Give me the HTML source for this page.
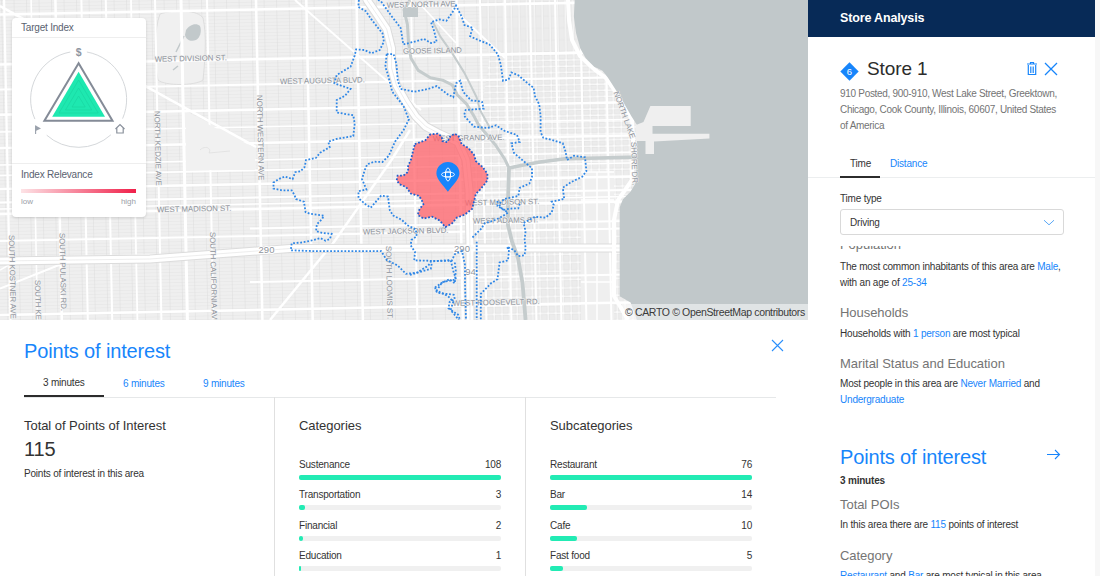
<!DOCTYPE html>
<html><head><meta charset="utf-8">
<style>
*{margin:0;padding:0;box-sizing:border-box}
html,body{width:1100px;height:576px;overflow:hidden;background:#fff;font-family:"Liberation Sans",sans-serif;color:#333}
.a{position:absolute;white-space:nowrap;line-height:1}
#map{position:absolute;left:0;top:0;width:808px;height:320px;overflow:hidden;background:#ebebeb}
#panel{position:absolute;left:808px;top:0;width:287px;height:576px;background:#fff;overflow:hidden}
#sb{position:absolute;left:1095px;top:0;width:5px;height:576px;background:#f7f7f7}
#bottom{position:absolute;left:0;top:320px;width:808px;height:256px;background:#fff;overflow:hidden}
.blue{color:#1785fb}
.grey{color:#747474}
.bar{position:absolute;height:5px;border-radius:2px;background:#f0f0f0}
.fill{position:absolute;left:0;top:0;height:5px;border-radius:2px;background:#22ebb4}
[style*="font-size:10px"]{letter-spacing:-0.2px}
[style*="font-size:13px"]{letter-spacing:-0.05px}
[style*="font-size:20px"]{letter-spacing:-0.15px}
</style></head><body>
<div id="map">
<svg width="808" height="320" viewBox="0 0 808 320" style="position:absolute;left:0;top:0" font-family="Liberation Sans, sans-serif">
<defs>
<pattern id="parcel" patternTransform="rotate(-1.15)" x="1" y="0" width="12.5" height="3.4" patternUnits="userSpaceOnUse"><path d="M0 0.2H12.5" stroke="#e2e2e2" stroke-width="0.6" fill="none"/><path d="M0.3 0V3.4" stroke="#dcdcdc" stroke-width="0.6" fill="none"/></pattern>
<pattern id="parcel2" patternTransform="rotate(-1.15)" x="4" y="14.5" width="25" height="12.5" patternUnits="userSpaceOnUse"><path d="M0 12.2H25" stroke="#f7f7f7" stroke-width="1.2" fill="none"/></pattern>
<pattern id="dtgrid" patternTransform="rotate(-1.15)" x="2.5" y="5" width="7.7" height="8.4" patternUnits="userSpaceOnUse"><rect x="0" y="0" width="7.7" height="8.4" fill="#ffffff"/><rect x="1" y="1" width="5.9" height="6.6" fill="#ececec" stroke="#dedede" stroke-width="0.6"/></pattern><pattern id="dtM" patternTransform="rotate(-1.15)" x="2.5" y="3" width="7.7" height="6.2" patternUnits="userSpaceOnUse"><rect x="0" y="0" width="7.7" height="6.2" fill="#ffffff"/><rect x="1" y="1" width="5.9" height="4.4" fill="#ececec" stroke="#dedede" stroke-width="0.6"/></pattern>
<pattern id="dtN" patternTransform="rotate(-1.15)" x="2.5" y="14" width="7.7" height="50" patternUnits="userSpaceOnUse"><rect x="0" y="0" width="7.7" height="50" fill="#ffffff"/><rect x="1" y="1.2" width="5.9" height="47.6" fill="#ececec" stroke="#dedede" stroke-width="0.6"/><path d="M1 13H6.9M1 25H6.9M1 37H6.9" stroke="#e0e0e0" stroke-width="0.5"/></pattern>
</defs>
<rect width="808" height="320" fill="#efefef"/>
<rect width="808" height="320" fill="url(#parcel)"/>
<polygon points="480,0 575,0 578,40 582,54 490,54 480,40" fill="url(#dtN)"/><polygon points="490,54 582,54 590,62 603,72 618,95 630,118 640,125 640,160 470,160 480,120" fill="url(#dtM)"/><polygon points="470,160 640,160 640,320 470,320" fill="url(#dtgrid)"/><rect x="581" y="172" width="33" height="148" fill="#efefef"/><path d="M581,172H614M581,200H614M581,248H614M581,282H614M597,172V320" stroke="#fff" stroke-width="1.5"/><circle cx="605.5" cy="247" r="3" fill="#c5cccd"/>
<path d="M160,14 C175,9 198,10 203,18 C207,35 205,60 203,80 C195,86 165,86 158,80 C154,60 154,30 160,14 Z" fill="#f0f0f0" stroke="#d9d9d9" stroke-width="0.8"/>
<path d="M186,30 C189,25 196,22 200,26 C202,31 200,38 196,40 C191,42 186,40 185,35 Z" fill="#c2c9cb"/><path d="M184,36 L176,52 M173,70 L178,66" stroke="#c2c9cb" stroke-width="1.5" fill="none"/>
<path d="M185,111 L256,146 L256,171 L185,171 Z" fill="#f1f1f1"/>
<g stroke="#ffffff" fill="none"><line x1="4.10" y1="0" x2="10.50" y2="320" stroke-width="2.2"/><line x1="31.10" y1="0" x2="37.50" y2="320" stroke-width="1.6"/><line x1="55.40" y1="0" x2="61.80" y2="320" stroke-width="2.5"/><line x1="81.40" y1="0" x2="87.80" y2="320" stroke-width="2"/><line x1="105.80" y1="0" x2="112.20" y2="320" stroke-width="2"/><line x1="131.00" y1="0" x2="137.40" y2="320" stroke-width="1.8"/><line x1="155.00" y1="0" x2="161.40" y2="320" stroke-width="2"/><line x1="181.00" y1="0" x2="187.40" y2="320" stroke-width="3"/><line x1="207.00" y1="0" x2="213.40" y2="320" stroke-width="2"/><line x1="256.00" y1="0" x2="262.40" y2="320" stroke-width="2.5"/><line x1="306.30" y1="0" x2="312.70" y2="320" stroke-width="2.5"/><line x1="356.50" y1="0" x2="362.90" y2="320" stroke-width="2.5"/><line x1="411.00" y1="0" x2="417.40" y2="320" stroke-width="2"/><line x1="456.50" y1="0" x2="462.90" y2="320" stroke-width="2.5"/><line x1="480.00" y1="0" x2="486.40" y2="320" stroke-width="2"/><line x1="505.00" y1="0" x2="511.40" y2="320" stroke-width="2"/><line x1="530.00" y1="0" x2="536.40" y2="320" stroke-width="2"/><line x1="555.00" y1="0" x2="561.40" y2="320" stroke-width="2"/><line x1="580.00" y1="0" x2="586.40" y2="320" stroke-width="2"/><line x1="605.00" y1="0" x2="611.40" y2="320" stroke-width="2"/><line x1="0" y1="14.50" x2="640" y2="1.70" stroke-width="2.5"/><line x1="0" y1="64.40" x2="640" y2="51.60" stroke-width="2.5"/><line x1="0" y1="89.50" x2="640" y2="76.70" stroke-width="2"/><line x1="0" y1="114.80" x2="640" y2="102.00" stroke-width="2.5"/><line x1="0" y1="132.00" x2="640" y2="119.20" stroke-width="1.5"/><line x1="0" y1="148.00" x2="640" y2="135.20" stroke-width="2.5"/><line x1="0" y1="165.00" x2="640" y2="152.20" stroke-width="1.5"/><line x1="0" y1="175.50" x2="640" y2="162.70" stroke-width="1.6"/><line x1="0" y1="189.00" x2="640" y2="176.20" stroke-width="2.5"/><line x1="0" y1="202.50" x2="640" y2="189.70" stroke-width="2"/><line x1="0" y1="209.00" x2="640" y2="196.20" stroke-width="1.5"/><line x1="0" y1="214.00" x2="640" y2="201.20" stroke-width="2.5"/><line x1="0" y1="241.00" x2="640" y2="228.20" stroke-width="2"/><line x1="0" y1="258.00" x2="640" y2="245.20" stroke-width="1.5"/><line x1="0" y1="315.00" x2="640" y2="302.20" stroke-width="2.5"/><line x1="250" y1="228.50" x2="640" y2="220.70" stroke-width="2"/><line x1="250" y1="282.00" x2="640" y2="274.20" stroke-width="2"/><polyline points="452,8 505,58" stroke-width="2" fill="none"/><polyline points="420,4 456,43" stroke-width="1.8" fill="none"/><polyline points="0,6 256,147" stroke-width="2.5" fill="none"/><polyline points="295,0 386,80 421,110" stroke-width="2" fill="none"/><polyline points="410,130 391.5,160 334,242 270,320" stroke-width="2.5" fill="none"/><polyline points="0,288.6 59,265 85,257" stroke-width="2" fill="none"/><polyline points="0,270 22.6,257" stroke-width="1.5" fill="none"/></g>
<path d="M186,113 L255,148 L255,170 L186,170 Z" fill="#f1f1f1"/><path d="M200,150 C205,145 212,148 209,153 L230,151" stroke="#e0e0e0" stroke-width="0.8" fill="none"/>
<g fill="none" stroke-linejoin="round" stroke-linecap="round"><g stroke="#dcdcdc" stroke-width="9"><polyline points="0,261 150,259 290,248.5 470,248 640,248" /><polyline points="367,0 377,14.6 386.7,29 391.6,48.6 391.6,68 396.4,85 406,102 415.9,116.6 425.6,126.3 440,134 458,142 466,160 469,190 470,248 470,320" /></g><g stroke="#ffffff" stroke-width="7"><polyline points="0,261 150,259 290,248.5 470,248 640,248" /><polyline points="367,0 377,14.6 386.7,29 391.6,48.6 391.6,68 396.4,85 406,102 415.9,116.6 425.6,126.3 440,134 458,142 466,160 469,190 470,248 470,320" /></g><g stroke="#e8e8e8" stroke-width="0.8"><polyline points="0,261 150,259 290,248.5 470,248 640,248" /><polyline points="367,0 377,14.6 386.7,29 391.6,48.6 391.6,68 396.4,85 406,102 415.9,116.6 425.6,126.3 440,134 458,142 466,160 469,190 470,248 470,320" /></g></g>
<polyline points="568,0 569,20 572,40 580,56 595,70 606,78 620,98 632,120 633,140 632,180 618,200 614,220 614,296 628,320" fill="none" stroke="#fff" stroke-width="4"/>
<g fill="none" stroke="#c5cccd" stroke-linejoin="round"><polyline points="410.0,0.0 404.0,10.0 407.4,24.3 408.6,43.7 411.0,58.3 418.3,70.4 430.4,77.7 442.6,80.2 452.3,85.0 457.2,94.7 466.9,104.4 474.2,116.6 478.5,124.8 495.5,145.0 504.5,158.7 509.0,168.0" stroke-width="3"/><polyline points="432.9,21.9 440.2,36.4 452.3,53.4 464.4,72.9 471.7,87.4 476.6,97.2 480.0,110.0 490.0,128.0" stroke-width="2"/><polyline points="509.0,168.0 521.0,165.5 540.0,162.0 565.0,158.7 600.0,158.0 640.0,157.0" stroke-width="3.5"/><polyline points="509.0,168.0 508.0,200.0 508.0,225.0 512.0,241.7 518.0,258.0 522.5,283.0 525.6,320.0" stroke-width="3.8"/></g>
<rect x="403" y="7" width="15" height="10" fill="#c2c9cb"/>
<polygon points="574.7,0.0 573.9,16.7 576.1,33.3 580.3,48.6 585.8,58.3 594.2,66.7 602.5,70.8 608.0,77.8 620.5,97.2 631.7,116.7 637.0,125.0 637.0,160.0 635.3,183.8 630.6,191.6 622.8,199.4 619.7,207.2 619.7,296.2 630.6,302.5 636.9,320.0 808.0,320.0 808.0,0.0" fill="#c1c8ca"/>
<polygon points="636,125 643.5,122 650.4,106 690.7,106 690.7,126.1 652.5,126.1 652.5,133.75 709.4,133.75 709.4,138.6 654,141.4 654,154 645.5,154 645.5,141 636,141" fill="#efefef"/>
<g fill="#8e939b" stroke="#f2f2f2" stroke-width="1" paint-order="stroke"><text x="386.7" y="7.7" font-size="7.8" letter-spacing="0" text-anchor="start" transform="rotate(-1.15 386.7 7.7)">WEST NORTH AVE</text><text x="403" y="53.8" font-size="7.8" letter-spacing="0" text-anchor="start" transform="rotate(-1.15 403 53.8)">GOOSE ISLAND</text><text x="154.7" y="61.7" font-size="7.8" letter-spacing="0" text-anchor="start" transform="rotate(-1.15 154.7 61.7)">WEST DIVISION ST.</text><text x="280" y="84" font-size="7.8" letter-spacing="0" text-anchor="start" transform="rotate(-1.15 280 84)">WEST AUGUSTA BLVD.</text><text x="157" y="212.2" font-size="7.8" letter-spacing="0" text-anchor="start" transform="rotate(-1.15 157 212.2)">WEST MADISON ST.</text><text x="433" y="141.2" font-size="7.8" letter-spacing="0" text-anchor="start" transform="rotate(-1.15 433 141.2)">WEST GRAND AVE.</text><text x="465" y="205.5" font-size="7.8" letter-spacing="0" text-anchor="start" transform="rotate(-1.15 465 205.5)">WEST MADISON ST.</text><text x="473" y="223.6" font-size="7.8" letter-spacing="0" text-anchor="start" transform="rotate(-1.15 473 223.6)">WEST ADAMS ST.</text><text x="363" y="234.5" font-size="7.8" letter-spacing="0" text-anchor="start" transform="rotate(-1.15 363 234.5)">WEST JACKSON BLVD.</text><text x="452.7" y="305.8" font-size="7.8" letter-spacing="0" text-anchor="start" transform="rotate(-1.15 452.7 305.8)">WEST ROOSEVELT RD.</text><text x="154.5" y="111" font-size="7.8" letter-spacing="0" text-anchor="start" transform="rotate(88.85 154.5 111)">NORTH KEDZIE AVE</text><text x="257" y="95" font-size="7.8" letter-spacing="0" text-anchor="start" transform="rotate(88.85 257 95)">NORTH WESTERN AVE</text><text x="9" y="235" font-size="7.8" letter-spacing="0" text-anchor="start" transform="rotate(88.85 9 235)">SOUTH KOSTNER AVE</text><text x="35" y="280" font-size="7.8" letter-spacing="0" text-anchor="start" transform="rotate(88.85 35 280)">SOUTH KEDZIE AVE</text><text x="59.5" y="233" font-size="7.8" letter-spacing="0" text-anchor="start" transform="rotate(88.85 59.5 233)">SOUTH PULASKI RD.</text><text x="210" y="232" font-size="7.8" letter-spacing="0" text-anchor="start" transform="rotate(88.85 210 232)">SOUTH CALIFORNIA AVE</text><text x="386" y="246" font-size="7.8" letter-spacing="0" text-anchor="start" transform="rotate(88.85 386 246)">SOUTH LOOMIS ST.</text><text x="613.5" y="92.5" font-size="7.8" letter-spacing="0" text-anchor="start" transform="rotate(70 613.5 92.5)">NORTH LAKE</text><text x="631" y="142" font-size="7.8" letter-spacing="0" text-anchor="start" transform="rotate(88 631 142)">SHORE DR.</text></g>
<g fill="#8f949c" font-size="9.5" text-anchor="middle" stroke="#ffffff" stroke-width="2" paint-order="stroke"><text x="266.5" y="252.5">290</text><text x="462" y="252">290</text><text x="470.5" y="274.5">94</text></g>
<g fill="none" stroke="#2f87e6" stroke-width="1.8" stroke-dasharray="1.8 1.75">
<polyline points="358.9,0.0 358.3,6.9 365.8,11.1 371.4,19.4 376.9,26.4 382.5,33.3 383.9,41.7 379.7,50.0 371.4,53.3 364.4,50.0 356.1,49.4 354.7,55.6 350.6,66.7 336.7,75.0 334.4,83.3 350.6,88.9 345.0,95.8 336.7,100.0 336.7,112.5 353.3,115.3 354.7,123.6 353.3,136.1 336.7,138.9 328.3,141.7 329.7,147.2 320.0,152.8 315.8,158.0 306.0,160.0 304.7,166.9 300.4,171.3 295.2,172.2 292.6,179.1 284.8,176.5 278.7,179.1 273.5,182.6 273.5,188.6 282.2,190.4 291.7,190.4 294.3,194.7 296.0,199.1 303.9,201.7 305.6,212.1 309.9,213.8 323.8,215.6 322.1,219.0 316.9,224.2 316.0,231.2 322.1,232.9 331.6,233.8 329.9,239.0 325.6,240.7 320.3,238.1 310.8,240.7 301.3,242.5 291.7,243.3 290.8,250.3 313.4,251.1 356.8,251.1 381.1,251.1 386.7,260.0 397.8,265.6 406.0,273.9 417.2,272.5 428.3,265.6 431.0,261.4 450.6,260.0 453.3,271.0 456.0,279.4 442.2,282.2 436.7,290.6 447.8,296.0 453.3,301.7 450.6,310.0 458.9,320.0"/>
<polyline points="378.0,0.0 381.0,1.4 392.0,16.7 400.6,27.8 403.3,44.4 414.4,41.7 424.0,38.9 431.0,43.0 436.7,41.7 434.0,30.6 431.0,22.2 439.4,19.4 446.4,20.8 453.3,11.1 456.0,5.6 461.7,16.7 464.4,25.0 472.8,27.8 470.0,36.1 475.6,38.9 489.4,44.4 497.8,54.2 500.6,63.9 501.7,71.1 503.0,80.8 508.6,79.4 511.4,72.5 518.3,75.3 528.0,83.6 533.6,87.8 535.0,96.1 539.2,104.4 540.6,115.6 540.6,132.2 543.3,137.8 554.4,140.6 562.8,143.3 565.6,151.7 567.0,160.0 574.0,155.8 585.0,157.2 586.4,171.1 582.2,176.7 571.0,182.2 562.8,187.8 564.2,198.9 551.7,201.7 553.8,205.0 551.7,212.5 545.4,217.7 535.0,216.7 523.5,223.0 525.6,231.2 524.6,239.6 525.6,248.0 524.6,255.2 518.3,256.2 514.0,250.0 506.9,246.9 509.0,250.0 508.0,260.4 499.6,262.5 497.5,279.2 491.0,283.3 480.8,293.8 480.8,320.0"/>
<polyline points="386.7,54.2 393.6,54.2 396.4,63.9 397.8,80.6 400.6,88.9 414.4,91.7 428.3,88.9 436.7,86.1 447.8,94.4 453.3,97.2 456.1,83.3 460.3,80.6 463.0,91.7 471.0,100.3 482.0,101.7 483.6,108.6 465.6,110.0 464.0,115.6 473.9,126.7 487.8,128.0 496.0,125.3 504.4,130.8 517.0,135.0 519.7,142.0 511.4,143.3 514.0,153.0 523.9,161.4 532.0,168.3 532.0,176.7 529.4,183.6 519.7,187.8 518.3,196.0 504.4,198.9 498.9,204.4 503.0,210.0 510.0,208.6 518.3,208.3 520.4,202.0"/>
<polyline points="386.7,54.2 385.3,66.7 388.0,75.0 392.2,91.7 403.3,105.6 408.9,119.4 403.3,130.6 395.0,141.7 388.8,155.8 382.5,162.0 374.2,161.7 367.2,164.3 364.6,170.4 362.0,179.1 364.6,185.2 366.4,189.5 358.5,191.2 358.5,198.2 365.5,204.3 370.7,207.7 375.9,201.7 381.1,195.6 388.0,196.5 389.8,210.3 393.3,215.6 401.9,219.9 407.2,225.1 415.8,229.4 416.7,236.4 411.5,239.9 410.6,245.1 415.0,252.0 414.2,260.4 430.8,260.8 451.7,260.8 454.8,254.2 462.0,251.0 465.0,265.0 465.0,283.0 466.0,320.0"/>
<polyline points="410.0,275.0 420.4,271.9 430.8,268.8 431.9,262.5"/>
<polyline points="435.0,287.5 441.0,283.3 449.6,279.2 454.8,283.3 455.8,270.8 454.8,262.5"/>
<polyline points="435.0,287.5 437.0,292.7 453.8,294.8 454.8,299.0 449.6,302.0 448.5,308.3 458.0,314.6 460.0,320.0"/>
<polyline points="476.7,241.7 476.7,320.0"/>
<polyline points="472.5,237.5 480.8,229.2 485.0,223.0 493.3,220.8 501.7,216.7 508.0,212.5 497.5,206.0 497.5,200.0"/>
</g>
<polygon points="414.8,144.1 425.3,140.3 430.1,134.5 437.7,133.6 441.6,136.5 442.5,141.2 447.3,142.2 450.2,136.5 454.9,133.6 458.8,136.5 461.6,144.1 468.3,147.9 474.0,154.6 475.9,161.3 482.6,167.0 487.4,173.7 487.4,180.4 484.5,184.2 479.8,189.9 475.9,193.8 474.0,201.4 472.1,209.0 464.5,214.8 456.8,217.6 452.1,223.4 445.4,227.2 439.7,220.5 432.0,216.7 423.4,218.6 417.7,214.8 419.6,209.0 423.4,204.3 421.5,199.5 418.6,195.7 411.0,193.8 406.2,187.1 399.5,184.2 396.7,180.4 397.6,175.6 403.4,175.6 408.1,171.8 408.1,166.1 411.0,159.4 412.9,151.7" fill="#ff636b" fill-opacity="0.76" stroke="#1f5fcf" stroke-width="1.8" stroke-dasharray="1.8 1.75"/>
<path d="M447.9,191.7 C443,185 436.4,179 436.4,173.5 A11.5,11.5 0 1 1 459.4,173.5 C459.4,179 452.8,185 447.9,191.7 Z" fill="#1785fb"/>
<g fill="none" stroke="#fff" stroke-width="0.9"><rect x="445.6" y="172.1" width="4.8" height="4.8"/><ellipse cx="448" cy="174.5" rx="6.5" ry="2.5"/><ellipse cx="448" cy="174.5" rx="2.5" ry="6.5"/></g>
</svg>
<div style="position:absolute;left:622px;top:304px;width:186px;height:16px;background:rgba(255,255,255,0.5)"></div>
<div class="a" style="left:625px;top:307px;font-size:10.5px;letter-spacing:-0.35px;color:#3a3a3a">&copy; CARTO &copy; OpenStreetMap contributors</div>
<div style="position:absolute;left:12px;top:18px;width:134px;height:199px;background:#fff;border-radius:4px;box-shadow:0 1px 3px rgba(0,0,0,0.15)">
<div class="a" style="left:9px;top:5px;font-size:10px;color:#5a6270">Target Index</div>
<div style="position:absolute;left:0;top:19px;width:134px;height:1px;background:#eeeeee"></div>
<div style="position:absolute;left:0;top:145px;width:134px;height:1px;background:#eeeeee"></div>
<div class="a" style="left:9px;top:152px;font-size:10px;color:#5a6270">Index Relevance</div>
<div style="position:absolute;left:9px;top:171px;width:115px;height:4px;background:linear-gradient(90deg,#fde3e6,#f0204a)"></div>
<div class="a" style="left:9px;top:180px;font-size:8px;color:#9aa0a8">low</div>
<div class="a" style="left:104px;top:180px;width:20px;text-align:right;font-size:8px;color:#9aa0a8">high</div>
<svg style="position:absolute;left:0;top:0" width="134" height="145" viewBox="0 0 134 145">
<g fill="none" stroke="#cfd2d6" stroke-width="0.9">
<path d="M58.3,34.03 A48,48 0 0 0 22.9,101.1"/><path d="M74.9,34.03 A48,48 0 0 1 110.6,100.6"/><path d="M34.7,117.2 A48,48 0 0 0 98.9,116.8"/>
</g>
<polygon points="66.6,45.3 32.4,102.8 100.5,102.8" fill="none" stroke="#848b97" stroke-width="2"/>
<polygon points="66.6,53.7 40.2,98.7 93,98.7" fill="#1ee8b0"/>
<g fill="none" stroke="#17d39f" stroke-width="0.6"><polygon points="66.6,62 47,95 86.2,95"/><polygon points="66.6,70 53.5,92 79.7,92"/><polygon points="66.6,78 60,89 73.2,89"/></g>
<text x="66.6" y="37.5" font-size="10.5" font-weight="bold" fill="#8f96a1" text-anchor="middle">$</text>
<path d="M23.6,107.5 V116" stroke="#9aa1ac" stroke-width="1.1"/><path d="M23.6,107.5 L29,110.5 L23.6,113 Z" fill="#9aa1ac"/>
<path d="M103.5,111 L108,106.5 L112.5,111 M104.8,110 V115 H111.2 V110" fill="none" stroke="#8a919c" stroke-width="1.2"/>
</svg>
</div>
</div>
<div id="panel">
  <div style="position:absolute;left:0;top:0;width:287px;height:37px;background:#072a57"></div>
  <div class="a" style="left:32px;top:12px;font-size:12.5px;letter-spacing:-0.15px;color:#fff;font-weight:bold">Store Analysis</div>
  <!-- diamond -->
  <div style="position:absolute;left:35px;top:65px;width:13px;height:13px;background:#1785fb;transform:rotate(45deg)"></div>
  <div class="a" style="left:37px;top:67px;width:9px;text-align:center;font-size:9.5px;color:#fff">6</div>
  <div class="a" style="left:59px;top:59px;font-size:19px;letter-spacing:-0.1px;color:#2c2c2c">Store 1</div>
  <!-- trash -->
  <svg style="position:absolute;left:218px;top:61px" width="12" height="15" viewBox="0 0 12 15">
    <path d="M1 3h10M4.5 3V1.5h3V3M2.3 4v9.5h7.4V4M4.8 5.5v6.5M7.2 5.5v6.5" fill="none" stroke="#1785fb" stroke-width="1.2"/>
  </svg>
  <svg style="position:absolute;left:236px;top:62px" width="14" height="14" viewBox="0 0 14 14">
    <path d="M1 1L13 13M13 1L1 13" stroke="#1785fb" stroke-width="1.3"/>
  </svg>
  <div style="position:absolute;left:32px;top:86px;width:226px;font-size:10px;letter-spacing:-0.3px;line-height:16px;color:#747474">910 Posted, 900-910, West Lake Street, Greektown, Chicago, Cook County, Illinois, 60607, United States of America</div>
  <!-- tabs -->
  <div class="a" style="left:42px;top:159px;font-size:10px">Time</div>
  <div class="a blue" style="left:82px;top:159px;font-size:10px">Distance</div>
  <div style="position:absolute;left:0;top:177px;width:287px;height:1px;background:#eceeef"></div>
  <div style="position:absolute;left:32px;top:176px;width:40px;height:2px;background:#2c2c2c"></div>
  <div class="a" style="left:32px;top:194px;font-size:10px">Time type</div>
  <div style="position:absolute;left:32px;top:209px;width:224px;height:26px;border:1px solid #d9d9d9;border-radius:3px"></div>
  <div class="a" style="left:42px;top:218px;font-size:10px">Driving</div>
  <svg style="position:absolute;left:234px;top:218px" width="14" height="9" viewBox="0 0 14 9"><path d="M2 2.2L7 6.8L12 2.2" fill="none" stroke="#5aa8f6" stroke-width="1"/></svg>
  <!-- scroll content -->
  <div style="position:absolute;left:0;top:246px;width:287px;height:330px;overflow:hidden">
    <div class="a grey" style="left:32px;top:-8px;font-size:13px">Population</div>
    <div style="position:absolute;left:32px;top:13px;width:240px;font-size:10px;line-height:16px">The most common inhabitants of this area are <span class="blue">Male</span>, with an age of <span class="blue">25-34</span></div>
    <div class="a grey" style="left:32px;top:60px;font-size:13px">Households</div>
    <div class="a" style="left:32px;top:83px;font-size:10px">Households with <span class="blue">1 person</span> are most typical</div>
    <div class="a grey" style="left:32px;top:111px;font-size:13px">Marital Status and Education</div>
    <div style="position:absolute;left:32px;top:130px;width:240px;font-size:10px;line-height:16px">Most people in this area are <span class="blue">Never Married</span> and <span class="blue">Undergraduate</span></div>
    <div class="a blue" style="left:32px;top:201px;font-size:20px">Points of interest</div>
    <svg style="position:absolute;left:238px;top:203px" width="15" height="11" viewBox="0 0 15 11"><path d="M1 5.5H13.5M9 1L13.5 5.5L9 10" fill="none" stroke="#1785fb" stroke-width="1.1"/></svg>
    <div class="a" style="left:32px;top:230px;font-size:10px;font-weight:bold">3 minutes</div>
    <div class="a grey" style="left:32px;top:252px;font-size:13px">Total POIs</div>
    <div class="a" style="left:32px;top:274px;font-size:10px">In this area there are <span class="blue">115</span> points of interest</div>
    <div class="a grey" style="left:32px;top:303px;font-size:13px">Category</div>
    <div class="a" style="left:32px;top:325px;font-size:10px"><span class="blue">Restaurant</span> and <span class="blue">Bar</span> are most typical in this area</div>
  </div>
</div>
<div id="sb"></div>

<div id="bottom">
  <div class="a blue" style="left:24px;top:21px;font-size:20px">Points of interest</div>
  <svg style="position:absolute;left:771px;top:19px" width="13" height="13" viewBox="0 0 13 13"><path d="M1 1L12 12M12 1L1 12" stroke="#2a8ffb" stroke-width="1.1"/></svg>
  <div class="a" style="left:43px;top:58px;font-size:10px">3 minutes</div>
  <div class="a blue" style="left:123px;top:59px;font-size:10px">6 minutes</div>
  <div class="a blue" style="left:203px;top:59px;font-size:10px">9 minutes</div>
  <div style="position:absolute;left:24px;top:77px;width:752px;height:1px;background:#e6e8e9"></div>
  <div style="position:absolute;left:24px;top:75px;width:80px;height:2px;background:#2c2c2c"></div>
  <div style="position:absolute;left:274px;top:77px;width:1px;height:180px;background:#e0e0e0"></div>
  <div style="position:absolute;left:525px;top:77px;width:1px;height:180px;background:#e0e0e0"></div>

  <div class="a" style="left:24px;top:99px;font-size:13px">Total of Points of Interest</div>
  <div class="a" style="left:24px;top:119px;font-size:20px">115</div>
  <div class="a" style="left:24px;top:149px;font-size:10px">Points of interest in this area</div>

  <div class="a" style="left:299px;top:99px;font-size:13px">Categories</div>
  <div class="a" style="left:299px;top:140px;font-size:10px">Sustenance</div><div class="a" style="left:451px;top:140px;width:50px;text-align:right;font-size:10px">108</div>
  <div class="bar" style="left:299px;top:155px;width:202px"><div class="fill" style="width:202px"></div></div>
  <div class="a" style="left:299px;top:170px;font-size:10px">Transportation</div><div class="a" style="left:451px;top:170px;width:50px;text-align:right;font-size:10px">3</div>
  <div class="bar" style="left:299px;top:185px;width:202px"><div class="fill" style="width:6px"></div></div>
  <div class="a" style="left:299px;top:201px;font-size:10px">Financial</div><div class="a" style="left:451px;top:201px;width:50px;text-align:right;font-size:10px">2</div>
  <div class="bar" style="left:299px;top:216px;width:202px"><div class="fill" style="width:4px"></div></div>
  <div class="a" style="left:299px;top:231px;font-size:10px">Education</div><div class="a" style="left:451px;top:231px;width:50px;text-align:right;font-size:10px">1</div>
  <div class="bar" style="left:299px;top:246px;width:202px"><div class="fill" style="width:2px"></div></div>

  <div class="a" style="left:550px;top:99px;font-size:13px">Subcategories</div>
  <div class="a" style="left:550px;top:140px;font-size:10px">Restaurant</div><div class="a" style="left:702px;top:140px;width:50px;text-align:right;font-size:10px">76</div>
  <div class="bar" style="left:550px;top:155px;width:202px"><div class="fill" style="width:202px"></div></div>
  <div class="a" style="left:550px;top:170px;font-size:10px">Bar</div><div class="a" style="left:702px;top:170px;width:50px;text-align:right;font-size:10px">14</div>
  <div class="bar" style="left:550px;top:185px;width:202px"><div class="fill" style="width:37px"></div></div>
  <div class="a" style="left:550px;top:201px;font-size:10px">Cafe</div><div class="a" style="left:702px;top:201px;width:50px;text-align:right;font-size:10px">10</div>
  <div class="bar" style="left:550px;top:216px;width:202px"><div class="fill" style="width:27px"></div></div>
  <div class="a" style="left:550px;top:231px;font-size:10px">Fast food</div><div class="a" style="left:702px;top:231px;width:50px;text-align:right;font-size:10px">5</div>
  <div class="bar" style="left:550px;top:246px;width:202px"><div class="fill" style="width:13px"></div></div>
</div>
</body></html>
